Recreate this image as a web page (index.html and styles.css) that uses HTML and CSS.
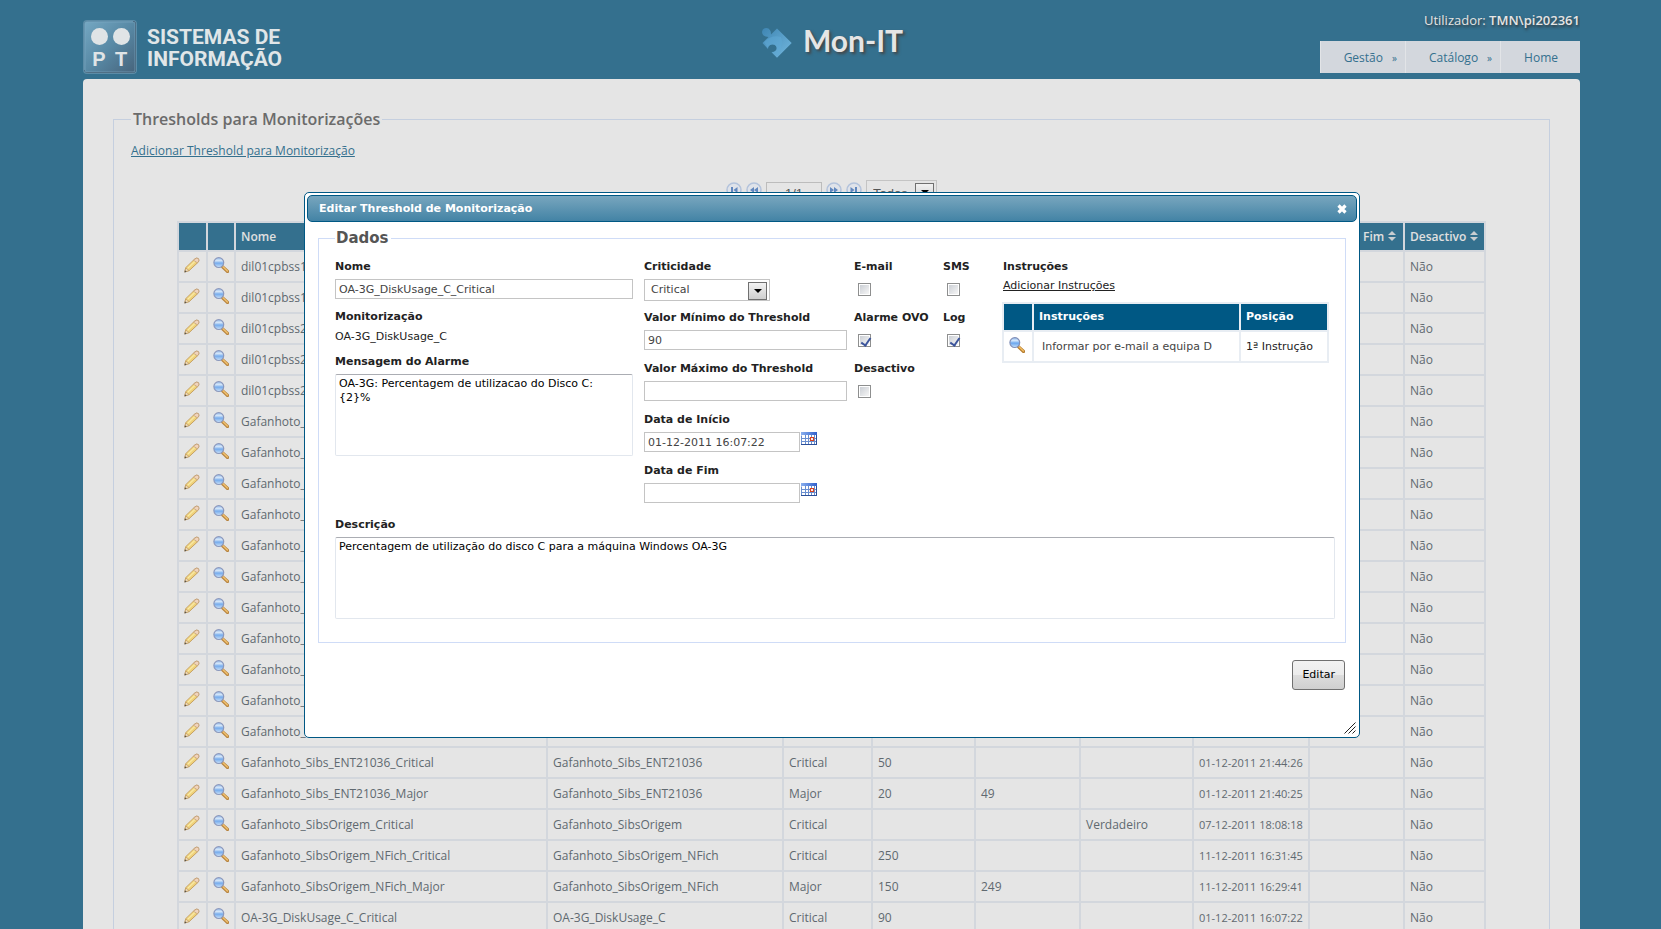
FILE: index.html
```html
<!DOCTYPE html>
<html lang="pt">
<head>
<meta charset="utf-8">
<title>Mon-IT</title>
<link rel="stylesheet" href="styles.css">
</head>
<body>
<svg class="sprite" width="0" height="0" aria-hidden="true">
  <defs>
    <linearGradient id="lensFill" x1="0" y1="0" x2="0" y2="1">
      <stop offset="0" stop-color="#8fbcf0"/><stop offset=".3" stop-color="#d3e6fb"/>
      <stop offset=".55" stop-color="#6aa6ee"/><stop offset="1" stop-color="#c9e2fb"/>
    </linearGradient>
    <linearGradient id="woodFill" x1="0" y1="0" x2="1" y2="1">
      <stop offset="0" stop-color="#fff0a0"/><stop offset="1" stop-color="#e6b84a"/>
    </linearGradient>
    <linearGradient id="pieceFill" x1="0" y1="0" x2="1" y2="1">
      <stop offset="0" stop-color="#3f86b3"/><stop offset="1" stop-color="#73b8df"/>
    </linearGradient>
    <linearGradient id="calFill" x1="0" y1="0" x2="1" y2="0">
      <stop offset="0" stop-color="#8bb0ee"/><stop offset="1" stop-color="#2f5fcc"/>
    </linearGradient>
    <symbol id="pencil" viewBox="0 0 16 16">
      <path d="M.8 14.800 1.800 10.600 10.900 1.800Q12.600.5 14.300 1.500 15.500 3 14.500 4.900L5.300 13.500Z" fill="url(#woodFill)" stroke="#b98a45" stroke-width=".8"/>
      <path d="M1.700 10.900 5.200 13.600.8 15.100Z" fill="#ecd6b2" stroke="#b98a45" stroke-width=".6"/>
      <path d="M.5 15.500 1 13.300 2.600 14.800Z" fill="#444"/>
      <path d="M3.800 11.400 11 4.500" stroke="#fff3b0" stroke-width="1"/>
      <path d="M10.700 2.200Q12.500.6 14.300 1.600 15.500 3 14.400 4.600L13.200 5.700 9.600 3.300Z" fill="#f3d3b8" stroke="#b08a6c" stroke-width=".6"/>
    </symbol>
    <symbol id="lens" viewBox="0 0 16 16">
      <path d="M9.600 9.800 14.600 14.500" stroke="#b37a2e" stroke-width="3.200" stroke-linecap="round"/>
      <path d="M10 9.800 14.400 14" stroke="#f2bd62" stroke-width="1.500" stroke-linecap="round"/>
      <circle cx="5.800" cy="5.600" r="4.900" fill="url(#lensFill)" stroke="#8290b8" stroke-width="1.200"/>
    </symbol>
    <symbol id="calendar" viewBox="0 0 16 13">
      <path d="M0 0H16V13H0Z" fill="#fff"/>
      <path d="M.5 3.500V12.500H15.500V3.500M4.500 3V13M7.500 3V13M10.500 3V13M13.500 3V13M0 6.500H16M0 9.500H16" fill="none" stroke="#6a8fd0"/>
      <path d="M0 0H16V3H0Z" fill="url(#calFill)"/>
      <path d="M0 12.500H16M15.500 3V13" stroke="#2c4f98"/>
      <path d="M9.500 5.500H12.500V8.500H9.500Z" fill="#fff" stroke="#d8421f" stroke-width="1.200"/>
    </symbol>
    <symbol id="sort" viewBox="0 0 8 10">
      <path d="M0 4 4 0 8 4ZM0 6 4 10 8 6Z" fill="#c9cdd0"/>
    </symbol>
    <symbol id="step" viewBox="0 0 16 16">
      <circle cx="8" cy="8" r="7" fill="#dfe3ea" stroke="#b3c3dc" stroke-width="1.500"/>
      <path d="M8 5V11L4 8ZM12 5V11L8 8Z" fill="#6288bf"/>
    </symbol>
    <symbol id="jump" viewBox="0 0 16 16">
      <circle cx="8" cy="8" r="7" fill="#dfe3ea" stroke="#b3c3dc" stroke-width="1.500"/>
      <path d="M4.500 5 8.500 8 4.500 11ZM9 5H11V11H9Z" fill="#6288bf"/>
    </symbol>
  </defs>
</svg>

<div class="page">
  <header class="header">
    <div class="brand">
      <svg width="54" height="54" viewBox="0 0 54 54" role="img" aria-label="PT">
        <defs><linearGradient id="tile" x1="0" y1="0" x2="1" y2="1">
          <stop offset="0" stop-color="#74a7c2"/><stop offset=".5" stop-color="#5889a5"/><stop offset="1" stop-color="#47647c"/>
        </linearGradient></defs>
        <rect width="54" height="54" rx="4" fill="#5c8ca7"/>
        <path d="M50 1Q53 1 53 5V50Q53 53 49 53H5Q2 53 1 50L52 48Z" fill="#3c566b"/>
        <rect x="2" y="2" width="50" height="50" rx="2" fill="url(#tile)" stroke="#7eabc4" stroke-opacity=".6"/>
        <circle cx="16.500" cy="16.500" r="8.500" fill="#e0e4e6"/><circle cx="38.500" cy="16.500" r="8.500" fill="#e0e4e6"/>
        <text class="tile-text" x="16" y="46">P</text><text class="tile-text" x="38" y="46">T</text>
      </svg>
      <div class="brand-name">SISTEMAS DE<br>INFORMAÇÃO</div>
    </div>
    <div class="app">
      <svg width="30" height="30" viewBox="0 0 30 30" aria-hidden="true">
        <path d="M15 .5 29.700 15 15 29.700 9.500 24.300Q14.500 24 14.700 20 14 16 10 16.500 6 17 6 21L.5 15 6.500 9Q0 8.500 0 4 .5 0 4.500 0 9 .5 9 6.500Z" fill="url(#pieceFill)"/>
        <path d="M2 14Q10 6 19 9 22 16 16 28L10 24Q15 23 14.700 20 14 16 10 16.500 6 17 6 20Z" fill="#5fa9d6" opacity=".5"/>
      </svg>
      <h1 class="app-name">Mon-IT</h1>
    </div>
    <div class="account">
      <div class="user">Utilizador: <b>TMN\pi202361</b></div>
      <nav class="menu">
        <a class="menu-item has-sub" href="#">Gestão<span class="more">»</span></a>
        <a class="menu-item has-sub" href="#">Catálogo<span class="more">»</span></a>
        <a class="menu-item" href="#">Home</a>
      </nav>
    </div>
  </header>

  <main class="panel">
    <fieldset class="section">
      <legend class="section-title">Thresholds para Monitorizações</legend>
      <a class="add-link" href="#">Adicionar Threshold para Monitorização</a>
      <div class="pager">
        <button class="icon-btn" type="button" aria-label="Primeira"><svg class="flip" width="16" height="16"><use href="#jump"/></svg></button>
        <button class="icon-btn" type="button" aria-label="Anterior"><svg width="16" height="16"><use href="#step"/></svg></button>
        <input class="pager-page" type="text" value="1/1" aria-label="Página">
        <button class="icon-btn" type="button" aria-label="Seguinte"><svg class="flip" width="16" height="16"><use href="#step"/></svg></button>
        <button class="icon-btn" type="button" aria-label="Última"><svg width="16" height="16"><use href="#jump"/></svg></button>
        <span class="select pager-size"><select aria-label="Registos"><option>Todos</option></select></span>
      </div>
      <table class="grid">
        <colgroup><col class="c-icon"><col class="c-lens"><col><col class="c-mon"><col class="c-crit"><col class="c-min"><col class="c-max"><col class="c-ver"><col class="c-ini"><col class="c-fim"><col class="c-off"></colgroup>
        <thead><tr><th></th><th></th><th>Nome</th><th></th><th></th><th></th><th></th><th></th><th></th><th>Data de Fim<svg class="sort" width="8" height="10"><use href="#sort"/></svg></th><th>Desactivo<svg class="sort" width="8" height="10"><use href="#sort"/></svg></th></tr></thead>
        <tbody>
          <tr><td><svg class="pen"><use href="#pencil"/></svg></td><td><svg class="mag"><use href="#lens"/></svg></td><td>dil01cpbss11</td><td></td><td></td><td></td><td></td><td></td><td></td><td></td><td>Não</td></tr>
          <tr><td><svg class="pen"><use href="#pencil"/></svg></td><td><svg class="mag"><use href="#lens"/></svg></td><td>dil01cpbss11</td><td></td><td></td><td></td><td></td><td></td><td></td><td></td><td>Não</td></tr>
          <tr><td><svg class="pen"><use href="#pencil"/></svg></td><td><svg class="mag"><use href="#lens"/></svg></td><td>dil01cpbss2</td><td></td><td></td><td></td><td></td><td></td><td></td><td></td><td>Não</td></tr>
          <tr><td><svg class="pen"><use href="#pencil"/></svg></td><td><svg class="mag"><use href="#lens"/></svg></td><td>dil01cpbss2</td><td></td><td></td><td></td><td></td><td></td><td></td><td></td><td>Não</td></tr>
          <tr><td><svg class="pen"><use href="#pencil"/></svg></td><td><svg class="mag"><use href="#lens"/></svg></td><td>dil01cpbss22</td><td></td><td></td><td></td><td></td><td></td><td></td><td></td><td>Não</td></tr>
          <tr><td><svg class="pen"><use href="#pencil"/></svg></td><td><svg class="mag"><use href="#lens"/></svg></td><td>Gafanhoto_</td><td></td><td></td><td></td><td></td><td></td><td></td><td></td><td>Não</td></tr>
          <tr><td><svg class="pen"><use href="#pencil"/></svg></td><td><svg class="mag"><use href="#lens"/></svg></td><td>Gafanhoto_</td><td></td><td></td><td></td><td></td><td></td><td></td><td></td><td>Não</td></tr>
          <tr><td><svg class="pen"><use href="#pencil"/></svg></td><td><svg class="mag"><use href="#lens"/></svg></td><td>Gafanhoto_</td><td></td><td></td><td></td><td></td><td></td><td></td><td></td><td>Não</td></tr>
          <tr><td><svg class="pen"><use href="#pencil"/></svg></td><td><svg class="mag"><use href="#lens"/></svg></td><td>Gafanhoto_</td><td></td><td></td><td></td><td></td><td></td><td></td><td></td><td>Não</td></tr>
          <tr><td><svg class="pen"><use href="#pencil"/></svg></td><td><svg class="mag"><use href="#lens"/></svg></td><td>Gafanhoto_</td><td></td><td></td><td></td><td></td><td></td><td></td><td></td><td>Não</td></tr>
          <tr><td><svg class="pen"><use href="#pencil"/></svg></td><td><svg class="mag"><use href="#lens"/></svg></td><td>Gafanhoto_</td><td></td><td></td><td></td><td></td><td></td><td></td><td></td><td>Não</td></tr>
          <tr><td><svg class="pen"><use href="#pencil"/></svg></td><td><svg class="mag"><use href="#lens"/></svg></td><td>Gafanhoto_</td><td></td><td></td><td></td><td></td><td></td><td></td><td></td><td>Não</td></tr>
          <tr><td><svg class="pen"><use href="#pencil"/></svg></td><td><svg class="mag"><use href="#lens"/></svg></td><td>Gafanhoto_</td><td></td><td></td><td></td><td></td><td></td><td></td><td></td><td>Não</td></tr>
          <tr><td><svg class="pen"><use href="#pencil"/></svg></td><td><svg class="mag"><use href="#lens"/></svg></td><td>Gafanhoto_</td><td></td><td></td><td></td><td></td><td></td><td></td><td></td><td>Não</td></tr>
          <tr><td><svg class="pen"><use href="#pencil"/></svg></td><td><svg class="mag"><use href="#lens"/></svg></td><td>Gafanhoto_</td><td></td><td></td><td></td><td></td><td></td><td></td><td></td><td>Não</td></tr>
          <tr><td><svg class="pen"><use href="#pencil"/></svg></td><td><svg class="mag"><use href="#lens"/></svg></td><td>Gafanhoto_</td><td></td><td></td><td></td><td></td><td></td><td></td><td></td><td>Não</td></tr>
          <tr><td><svg class="pen"><use href="#pencil"/></svg></td><td><svg class="mag"><use href="#lens"/></svg></td><td>Gafanhoto_Sibs_ENT21036_Critical</td><td>Gafanhoto_Sibs_ENT21036</td><td>Critical</td><td>50</td><td></td><td></td><td class="when">01-12-2011 21:44:26</td><td></td><td>Não</td></tr>
          <tr><td><svg class="pen"><use href="#pencil"/></svg></td><td><svg class="mag"><use href="#lens"/></svg></td><td>Gafanhoto_Sibs_ENT21036_Major</td><td>Gafanhoto_Sibs_ENT21036</td><td>Major</td><td>20</td><td>49</td><td></td><td class="when">01-12-2011 21:40:25</td><td></td><td>Não</td></tr>
          <tr><td><svg class="pen"><use href="#pencil"/></svg></td><td><svg class="mag"><use href="#lens"/></svg></td><td>Gafanhoto_SibsOrigem_Critical</td><td>Gafanhoto_SibsOrigem</td><td>Critical</td><td></td><td></td><td>Verdadeiro</td><td class="when">07-12-2011 18:08:18</td><td></td><td>Não</td></tr>
          <tr><td><svg class="pen"><use href="#pencil"/></svg></td><td><svg class="mag"><use href="#lens"/></svg></td><td>Gafanhoto_SibsOrigem_NFich_Critical</td><td>Gafanhoto_SibsOrigem_NFich</td><td>Critical</td><td>250</td><td></td><td></td><td class="when">11-12-2011 16:31:45</td><td></td><td>Não</td></tr>
          <tr><td><svg class="pen"><use href="#pencil"/></svg></td><td><svg class="mag"><use href="#lens"/></svg></td><td>Gafanhoto_SibsOrigem_NFich_Major</td><td>Gafanhoto_SibsOrigem_NFich</td><td>Major</td><td>150</td><td>249</td><td></td><td class="when">11-12-2011 16:29:41</td><td></td><td>Não</td></tr>
          <tr><td><svg class="pen"><use href="#pencil"/></svg></td><td><svg class="mag"><use href="#lens"/></svg></td><td>OA-3G_DiskUsage_C_Critical</td><td>OA-3G_DiskUsage_C</td><td>Critical</td><td>90</td><td></td><td></td><td class="when">01-12-2011 16:07:22</td><td></td><td>Não</td></tr>
        </tbody>
      </table>
    </fieldset>
  </main>
</div>

<div class="dialog" role="dialog" aria-labelledby="dlg-title">
  <div class="dialog-bar">
    <span id="dlg-title">Editar Threshold de Monitorização</span>
    <button class="icon-btn" type="button" aria-label="Fechar"><svg width="10" height="10" viewBox="0 0 10 10"><path d="M1.500 1.500 8.500 8.500M8.500 1.500 1.500 8.500" stroke="#fff" stroke-width="3.200"/></svg></button>
  </div>
  <form class="dialog-body">
    <fieldset class="data">
      <legend class="data-title">Dados</legend>
      <div class="columns">
        <div class="col-main">
          <label for="nome">Nome</label>
          <input class="field" id="nome" type="text" value="OA-3G_DiskUsage_C_Critical">
          <div class="label">Monitorização</div>
          <div class="value">OA-3G_DiskUsage_C</div>
          <label for="msg">Mensagem do Alarme</label>
          <textarea class="area" id="msg">OA-3G: Percentagem de utilizacao do Disco C: {2}%</textarea>
        </div>
        <div class="col-limits">
          <label for="crit">Criticidade</label>
          <span class="select crit"><select id="crit"><option>Critical</option></select></span>
          <label for="min">Valor Mínimo do Threshold</label>
          <input class="field" id="min" type="text" value="90">
          <label for="max">Valor Máximo do Threshold</label>
          <input class="field" id="max" type="text">
          <label for="ini">Data de Início</label>
          <div class="date"><input class="field" id="ini" type="text" value="01-12-2011 16:07:22"><button class="icon-btn" type="button" aria-label="Escolher data de início"><svg width="16" height="13"><use href="#calendar"/></svg></button></div>
          <label for="fim">Data de Fim</label>
          <div class="date"><input class="field" id="fim" type="text"><button class="icon-btn" type="button" aria-label="Escolher data de fim"><svg width="16" height="13"><use href="#calendar"/></svg></button></div>
        </div>
        <div class="checks">
          <div class="check"><label for="email">E-mail</label><input id="email" type="checkbox"></div>
          <div class="check"><label for="sms">SMS</label><input id="sms" type="checkbox"></div>
          <div class="check"><label for="ovo">Alarme OVO</label><input id="ovo" type="checkbox" checked></div>
          <div class="check"><label for="log">Log</label><input id="log" type="checkbox" checked></div>
          <div class="check"><label for="off">Desactivo</label><input id="off" type="checkbox"></div>
        </div>
        <div class="instructions">
          <div class="label">Instruções</div>
          <a class="instr-link" href="#">Adicionar Instruções</a>
          <table class="instr">
            <colgroup><col class="i-icon"><col><col class="i-pos"></colgroup>
            <thead><tr><th></th><th>Instruções</th><th>Posição</th></tr></thead>
            <tbody><tr><td><svg class="mag"><use href="#lens"/></svg></td><td class="instr-text">Informar por e-mail a equipa D</td><td>1ª Instrução</td></tr></tbody>
          </table>
        </div>
      </div>
      <label for="desc">Descrição</label>
      <textarea class="area" id="desc">Percentagem de utilização do disco C para a máquina Windows OA-3G</textarea>
    </fieldset>
    <div class="actions"><button class="submit" type="button">Editar</button></div>
  </form>
  <svg class="grip" width="12" height="12" viewBox="0 0 12 12" aria-hidden="true"><path d="M.5 11.500 11.500.5M4.500 11.500 11.500 4.500M8.500 11.500 11.500 8.500" stroke="#222"/></svg>
</div>
</body>
</html>
```
FILE: styles.css
```css
* { box-sizing: border-box; }

body {
  margin: 0;
  height: 100vh;
  overflow: hidden;
  background: #34708e;
  color: #606970;
  font: 12px/16px "Open Sans", "Noto Sans", sans-serif;
}

.sprite { position: absolute; }

fieldset, legend, h1 { margin: 0; padding: 0; }

.icon-btn {
  display: block;
  padding: 0;
  border: 0;
  background: none;
}
.icon-btn svg { display: block; }
.flip { transform: scaleX(-1); }

.page {
  height: 100vh;
  margin: 0 81px 0 83px;
  overflow: hidden;
}

/* Header */
.header {
  display: grid;
  grid-template-columns: 1fr auto 1fr;
  height: 79px;
}
.brand {
  display: flex;
  gap: 10px;
  padding-top: 20px;
}
.brand-name {
  padding-top: 6px;
  color: #e0e6e8;
  font: bold 21px/22px Roboto, sans-serif;
}
.tile-text {
  fill: #e0e4e6;
  font: bold 20px "Liberation Sans", sans-serif;
  text-anchor: middle;
}
.app {
  display: flex;
  gap: 11px;
  padding: 28px 0 0 2px;
}
.app-name {
  margin-top: -8px;
  color: #e5e5e5;
  font: bold 30px/40px Lato, sans-serif;
  text-shadow: 2px 2px 3px #444;
}
.account {
  display: flex;
  flex-direction: column;
  align-items: flex-end;
  gap: 11px;
  padding-top: 10px;
}
.user {
  color: #e5e5e5;
  font-size: 13px;
  line-height: 20px;
  text-shadow: 1px 2px 3px #333;
}
.user b { font-weight: 600; }
.menu { display: flex; }
.menu-item {
  padding: 8px 22px 6px 23px;
  border-left: 1px solid #e2e4e7;
  background: #d3d7dd;
  color: #34708e;
  line-height: 17px;
  text-decoration: none;
}
.has-sub { padding-right: 8px; }
.more {
  margin-left: 9px;
  font-size: 10px;
}

/* Main panel */
.panel {
  padding: 30px;
  border-radius: 4px 4px 0 0;
  background: #e5e5e5;
}
.section {
  padding: 0 17px 20px;
  border: 1px solid #c5cfdf;
}
.section-title {
  padding: 0 2px;
  color: #6b6b6b;
  font-size: 16px;
  font-weight: 600;
  line-height: 21px;
}
.add-link {
  display: block;
  width: max-content;
  margin-top: 12px;
  color: #34708e;
  line-height: 18px;
}
.pager {
  display: flex;
  justify-content: center;
  align-items: flex-start;
  gap: 4px;
  height: 41px;
  margin-top: 20px;
}
.pager .icon-btn { margin-top: 2px; }
.pager-page {
  width: 56px;
  height: 22px;
  margin-top: 2px;
  border: 1px solid #bcbcbc;
  background: none;
  color: #555;
  font: 13px "Liberation Sans", sans-serif;
  text-align: center;
}
.select {
  display: block;
  position: relative;
  border: 1px solid #c4c4c4;
}
.select select {
  width: 100%;
  height: 20px;
  padding: 0 6px;
  border: 0;
  background: none;
  color: inherit;
  font: inherit;
  appearance: none;
}
.select::before {
  content: "";
  position: absolute;
  top: 2px;
  right: 2px;
  width: 17px;
  height: 16px;
  border: 1px solid #707070;
  background: linear-gradient(#f2f2f2, #cfcfcf);
  pointer-events: none;
}
.select::after {
  content: "";
  position: absolute;
  top: 9px;
  right: 7px;
  border: 4px solid transparent;
  border-top-color: #000;
  border-bottom: 0;
  pointer-events: none;
}
.pager-size {
  width: 71px;
  color: #555;
  font: 13px "Liberation Sans", sans-serif;
}
.pager-size select { height: 24px; }

/* Threshold grid */
.grid, .instr {
  table-layout: fixed;
  border-collapse: collapse;
}
.grid {
  width: calc(100% - 92px);
  margin: 0 auto;
}
.grid th, .grid td {
  height: 31px;
  padding: 0 5px;
  border: 2px solid #d3d7dd;
  text-align: left;
  white-space: nowrap;
}
.grid th {
  height: 29px;
  background: #34708e;
  color: #e0e0e0;
  font-weight: 600;
}
.grid .when { font-size: 11px; }
.grid tbody svg { opacity: .9; }
.c-icon { width: 29px; }
.c-lens { width: 28px; }
.c-mon { width: 236px; }
.c-crit { width: 89px; }
.c-min { width: 103px; }
.c-max { width: 105px; }
.c-ver { width: 113px; }
.c-ini { width: 116px; }
.c-fim { width: 95px; }
.c-off { width: 81px; }
.sort { margin-left: 4px; }
.pen, .mag {
  display: block;
  width: 16px;
  height: 16px;
  margin-bottom: 4px;
}

/* Dialog */
.dialog {
  position: absolute;
  top: 192px;
  left: 304px;
  right: 301px;
  padding: 2px 2px 47px;
  border: 1px solid #005884;
  border-radius: 5px;
  background: #fff;
  color: #222;
  font: 11px/14px "DejaVu Sans", sans-serif;
}
.dialog-bar {
  display: flex;
  justify-content: space-between;
  align-items: center;
  height: 27px;
  padding: 1px 9px 0 11px;
  border: 1px solid #005884;
  border-radius: 5px;
  background: linear-gradient(#78a6be, #4383a5);
  color: #fff;
  font-weight: bold;
}
.dialog-body { padding: 8px 11px 0; }
.data {
  padding: 0 10px 23px 16px;
  border: 1px solid #cfdcf7;
}
.data-title {
  padding: 0 2px 0 1px;
  color: #555;
  font-size: 15px;
  font-weight: bold;
  line-height: 16px;
}
.columns {
  display: flex;
  align-items: flex-start;
  min-height: 272px;
  padding-top: 14px;
}
label, .label {
  display: block;
  height: 19px;
  font-weight: bold;
}
.col-main { width: 298px; margin-right: 11px; }
.field {
  display: block;
  width: 100%;
  height: 20px;
  margin-bottom: 11px;
  padding: 0 3px;
  border: 1px solid #c4c4c4;
  background: #fff;
  color: #444;
  font: inherit;
}
.value { height: 26px; padding-top: 1px; }
.area {
  display: block;
  width: 100%;
  height: 82px;
  padding: 2px 12px 2px 3px;
  border: 1px solid #e2e7ee;
  border-top-color: #abadb3;
  border-radius: 2px;
  color: #000;
  font: inherit;
  resize: none;
}
.col-limits { width: 203px; margin-right: 7px; }
.col-limits .field { margin-bottom: 12px; }
.crit {
  width: 126px;
  margin-bottom: 10px;
  color: #444;
}
.date {
  display: flex;
  align-items: flex-start;
  gap: 1px;
}
.date .field { width: 156px; }
.checks {
  display: grid;
  grid-template-columns: 89px 1fr;
  grid-auto-rows: 51px;
  width: 149px;
}
.check input {
  display: block;
  position: relative;
  width: 13px;
  height: 13px;
  margin: 4px;
  border: 1px solid #8e8f8f;
  background: linear-gradient(135deg, #cbcfd5, #f6f6f6) content-box;
  padding: 1px;
  appearance: none;
}
.check input:checked::after {
  content: "";
  position: absolute;
  top: 1px;
  left: 4px;
  width: 4px;
  height: 8px;
  border: solid #3c559c;
  border-width: 0 2px 2px 0;
  transform: rotate(35deg);
}
.instructions { flex: 1; }
.instr-link {
  display: block;
  width: max-content;
  margin-bottom: 10px;
  color: #222;
  line-height: 13px;
}
.instr { width: 327px; margin-left: -1px; }
.instr th, .instr td {
  height: 31px;
  padding: 0 6px 0 5px;
  border: 2px solid #e8edf3;
  text-align: left;
  white-space: nowrap;
}
.instr th {
  height: 28px;
  background: #005884;
  color: #fff;
}
.instr .instr-text { padding-left: 8px; color: #444; }
.i-icon { width: 30px; }
.i-pos { width: 88px; }
.actions {
  display: flex;
  justify-content: flex-end;
  padding: 17px 1px 0;
}
.submit {
  height: 30px;
  padding: 0 9px;
  border: 1px solid #707070;
  border-radius: 3px;
  background: linear-gradient(#f2f2f2, #ebebeb 50%, #dddddd 50%, #cfcfcf);
  color: #000;
  font: inherit;
}
.grip {
  position: absolute;
  right: 3px;
  bottom: 3px;
}
```
